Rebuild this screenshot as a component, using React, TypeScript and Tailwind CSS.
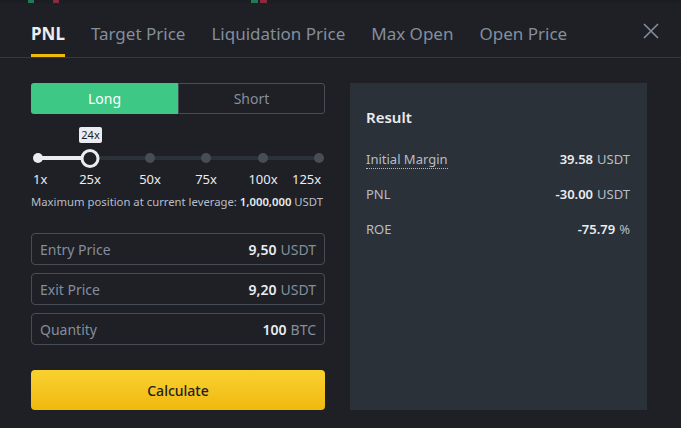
import React from 'react'

const tabs = ['PNL', 'Target Price', 'Liquidation Price', 'Max Open', 'Open Price']

const stops = [
  { label: '1x', x: 7 },
  { label: '25x', x: 59 },
  { label: '50x', x: 119 },
  { label: '75x', x: 175 },
  { label: '100x', x: 232 },
  { label: '125x', x: 288 },
]

function Field({ label, value, unit }: { label: string; value: string; unit: string }) {
  return (
    <div className="flex h-[32px] items-center justify-between rounded-[4px] border border-[#474d57] px-[8px] text-[14px]">
      <span className="text-[#848e9c]">{label}</span>
      <span>
        <span className="font-semibold text-[#eaecef]">{value}</span>
        <span className="ml-[4px] text-[#848e9c]">{unit}</span>
      </span>
    </div>
  )
}

function ResultRow({ label, value, unit, dotted }: { label: string; value: string; unit: string; dotted?: boolean }) {
  return (
    <div className="flex h-[35px] items-center justify-between text-[13px]">
      <span className={`text-[#b7bdc6] ${dotted ? 'border-b border-dotted border-[#b7bdc6] leading-[17px]' : ''}`}>{label}</span>
      <span>
        <span className="font-semibold text-[#eaecef]">{value}</span>
        <span className="ml-[4px] text-[#b7bdc6]">{unit}</span>
      </span>
    </div>
  )
}

export default function App() {
  return (
    <div className="relative h-[428px] w-[681px] overflow-hidden bg-[#1e2026] font-['Noto_Sans',sans-serif]">
      {/* chart strip peeking above the modal */}
      <div className="relative h-[3px] bg-[#1a1d22]">
        <div className="absolute left-[28px] top-0 h-[3px] w-[6px] bg-[#1f7a55]" />
        <div className="absolute left-[53px] top-0 h-[3px] w-[6px] bg-[#8a2a3f]" />
        <div className="absolute left-[251px] top-0 h-[3px] w-[7px] bg-[#1f7a55]" />
        <div className="absolute left-[260px] top-0 h-[3px] w-[7px] bg-[#8a2a3f]" />
      </div>

      <div className="flex h-[55px] items-stretch gap-[26px] border-b border-[#33373e] pl-[31px]">
        {tabs.map((t, i) => (
          <div key={t} className="relative flex items-center pt-[7px]">
            <span className={`text-[17px] ${i === 0 ? 'font-bold text-[#eaecef]' : 'text-[#848e9c]'}`}>{t}</span>
            {i === 0 && <div className="absolute bottom-0 left-0 h-[3px] w-full bg-[#f0b90b]" />}
          </div>
        ))}
      </div>
      <button className="absolute left-[642px] top-[22px] text-[#848e9c]">
        <svg width="18" height="18" viewBox="0 0 18 18" fill="none" stroke="currentColor" strokeWidth="1.6">
          <path d="M2 2l14 14M16 2L2 16" />
        </svg>
      </button>

      <div className="flex gap-[25px] pl-[31px] pt-[25px]">
        <div className="w-[294px]">
          <div className="flex h-[31px] text-[14px]">
            <div className="flex w-1/2 items-center justify-center rounded-l-[3px] bg-[#3dc985] text-white">Long</div>
            <div className="flex w-1/2 items-center justify-center rounded-r-[3px] border border-[#474d57] text-[#848e9c]">Short</div>
          </div>

          <div className="relative h-[76px]">
            <div className="absolute left-[48px] top-[13px] flex h-[16px] w-[23px] items-center justify-center rounded-[2px] bg-[#eaecef] text-[11px] text-[#1e2026]">24x</div>
            <div className="absolute left-[7px] right-[6px] top-[42px] h-[4px] rounded-full bg-[#2b3139]" />
            <div className="absolute left-[7px] top-[42px] h-[4px] w-[52px] bg-[#eaecef]" />
            {stops.map((s, i) => (
              <div
                key={s.label}
                className={`absolute top-[39px] h-[10px] w-[10px] -translate-x-1/2 rounded-full ${i === 0 ? 'bg-[#eaecef]' : 'bg-[#474d57]'}`}
                style={{ left: s.x }}
              />
            ))}
            <div className="absolute left-[59px] top-[35px] h-[19px] w-[19px] -translate-x-1/2 rounded-full border-[3px] border-[#eaecef] bg-[#1e2026]" />
            {stops.map((s, i) => (
              <span
                key={s.label}
                className={`absolute top-[56px] text-[13px] text-[#eaecef] ${i === 0 ? '-translate-x-[5px]' : i === 5 ? '-translate-x-[27px]' : '-translate-x-1/2'}`}
                style={{ left: s.x }}
              >
                {s.label}
              </span>
            ))}
          </div>

          <div className="h-[43px] pt-[4px] text-[11.3px] leading-[16px] text-[#b7bdc6]">
            Maximum position at current leverage: <span className="font-semibold text-[#eaecef]">1,000,000</span> USDT
          </div>

          <div className="flex flex-col gap-[8px]">
            <Field label="Entry Price" value="9,50" unit="USDT" />
            <Field label="Exit Price" value="9,20" unit="USDT" />
            <Field label="Quantity" value="100" unit="BTC" />
          </div>

          <button className="mt-[25px] flex h-[40px] w-full items-center justify-center rounded-[4px] bg-gradient-to-b from-[#f8d12f] to-[#f0b90b] text-[14px] font-medium text-[#1e2026]">
            Calculate
          </button>
        </div>

        <div className="h-[327px] w-[297px] bg-[#2b3139] px-[16px] pr-[17px] pt-[24px]">
          <div className="mb-[15px] h-[20px] text-[15px] font-semibold leading-[20px] text-[#eaecef]">Result</div>
          <ResultRow label="Initial Margin" value="39.58" unit="USDT" dotted />
          <ResultRow label="PNL" value="-30.00" unit="USDT" />
          <ResultRow label="ROE" value="-75.79" unit="%" />
        </div>
      </div>
    </div>
  )
}
